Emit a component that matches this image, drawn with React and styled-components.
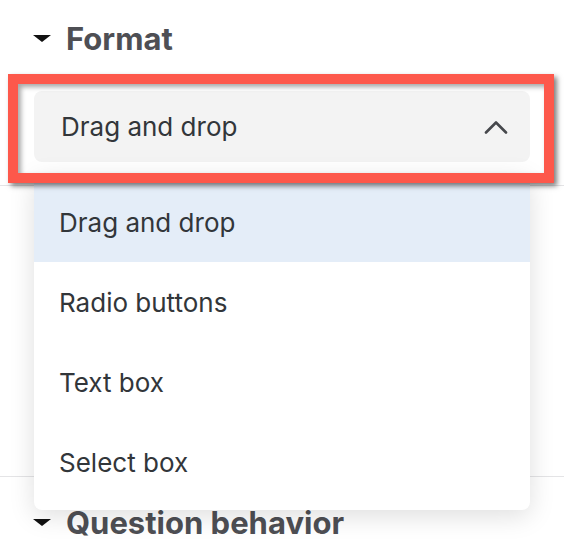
import React from 'react';
import styled, { createGlobalStyle } from 'styled-components';

const GlobalStyle = createGlobalStyle`
  html, body {
    margin: 0;
    padding: 0;
    background: #ffffff;
    overflow: hidden;
  }
  body {
    font-family: Inter, "Liberation Sans", sans-serif;
    color: #32363a;
  }
`;

const Page = styled.div`
  position: relative;
  width: 564px;
  height: 550px;
  overflow: hidden;
`;

const Section = styled.section`
  padding-top: ${p => p.top}px;
  border-bottom: ${p => (p.divided ? '1px solid #e4e4e6' : 'none')};
`;

const SectionHeader = styled.h2`
  display: flex;
  align-items: center;
  gap: 15px;
  margin: 0;
  padding-left: 33px;
  height: 36px;
  font-family: Inter, "Liberation Sans", sans-serif;
  font-weight: 700;
  font-size: 31px;
  color: #4e4f54;
`;

const Caret = styled.span`
  width: 0;
  height: 0;
  border-left: 9.5px solid transparent;
  border-right: 9.5px solid transparent;
  border-top: 7px solid #111;
`;

const Field = styled.div`
  position: relative;
  margin: ${p => p.gap}px 34px 0 34px;
  padding-bottom: 23px;
`;

const SelectBox = styled.div`
  display: flex;
  align-items: center;
  justify-content: space-between;
  height: 71px;
  padding: 0 22px 0 27px;
  background: #f3f3f3;
  border-radius: 8px;
  font-size: 26px;
  color: #32363a;
`;

const Spacer = styled.div`
  height: ${p => p.h}px;
`;

const Menu = styled.ul`
  position: absolute;
  top: 174px;
  left: 34px;
  width: 496px;
  margin: 0;
  padding: 8px 0;
  list-style: none;
  background: #fff;
  border-radius: 8px;
  box-shadow: 0 6px 26px rgba(0, 0, 0, 0.13);
  z-index: 2;
`;

const MenuItem = styled.li`
  display: flex;
  align-items: center;
  height: 80px;
  padding-left: 25px;
  font-size: 26px;
  color: #32363a;
  background: ${p => (p.active ? '#e4edf8' : 'transparent')};
`;

const Highlight = styled.div`
  position: absolute;
  left: 8px;
  top: 74px;
  width: 546px;
  height: 109px;
  box-sizing: border-box;
  border: 10px solid #fd584b;
  box-shadow: 3px 3px 5px rgba(0, 0, 0, 0.5), inset 3px 3px 5px rgba(0, 0, 0, 0.35);
  z-index: 3;
  pointer-events: none;
`;

const ChevronUp = () => (
  <svg width="24" height="14" viewBox="0 0 24 14" fill="none">
    <polyline points="2,12.5 12,2.5 22,12.5" stroke="#46484c" strokeWidth="2.6" strokeLinecap="round" strokeLinejoin="round" />
  </svg>
);

const options = ['Drag and drop', 'Radio buttons', 'Text box', 'Select box'];

export default function App() {
  const selected = 'Drag and drop';
  return (
    <Page>
      <GlobalStyle />
      <Section top={20} divided>
        <SectionHeader>
          <Caret />
          Format
        </SectionHeader>
        <Field gap={35}>
          <SelectBox>
            <span>{selected}</span>
            <ChevronUp />
          </SelectBox>
        </Field>
      </Section>
      <Section divided>
        <Spacer h={290} />
      </Section>
      <Section top={27}>
        <SectionHeader>
          <Caret />
          Question behavior
        </SectionHeader>
      </Section>
      <Menu>
        {options.map(o => (
          <MenuItem key={o} active={o === selected}>{o}</MenuItem>
        ))}
      </Menu>
      <Highlight />
    </Page>
  );
}
